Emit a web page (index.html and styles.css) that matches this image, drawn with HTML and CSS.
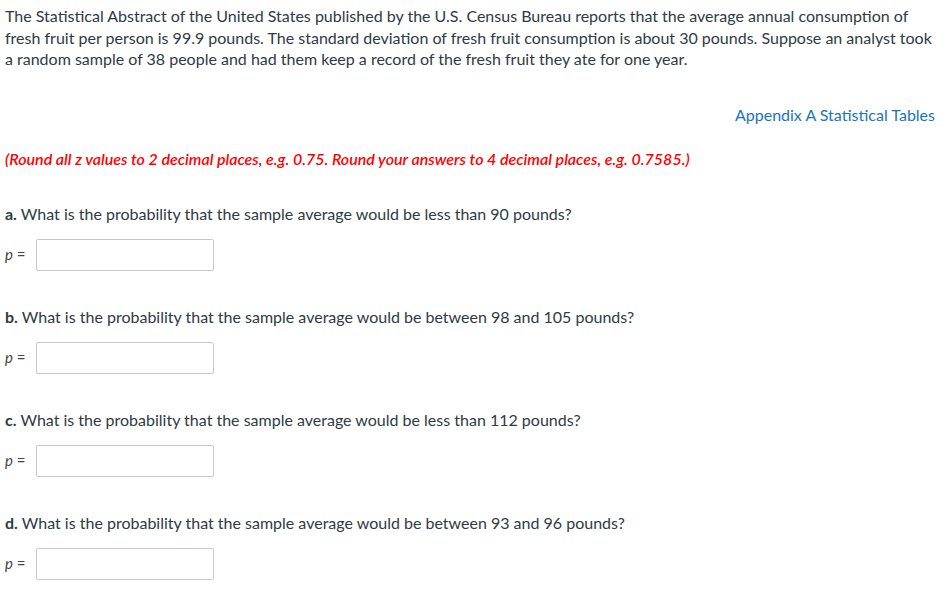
FILE: index.html
```html
<!DOCTYPE html>
<html>
<head>
<meta charset="utf-8">
<link rel="stylesheet" href="styles.css">
</head>
<body>
<div class="page">
  <p class="intro">The Statistical Abstract of the United States published by the U.S. Census Bureau reports that the average annual consumption of fresh fruit per person is 99.9 pounds. The standard deviation of fresh fruit consumption is about 30 pounds. Suppose an analyst took a random sample of 38 people and had them keep a record of the fresh fruit they ate for one year.</p>
  <div class="links"><a class="link" href="#">Appendix A Statistical Tables</a></div>
  <p class="note">(Round all z values to 2 decimal places, e.g. 0.75. Round your answers to 4 decimal places, e.g. 0.7585.)</p>
  <div class="question">
    <p class="qtext"><b>a.</b> What is the probability that the sample average would be less than 90 pounds?</p>
    <div class="answer"><span class="plabel"><i>p</i> =</span><span class="box"></span></div>
  </div>
  <div class="question">
    <p class="qtext"><b>b.</b> What is the probability that the sample average would be between 98 and 105 pounds?</p>
    <div class="answer"><span class="plabel"><i>p</i> =</span><span class="box"></span></div>
  </div>
  <div class="question">
    <p class="qtext"><b>c.</b> What is the probability that the sample average would be less than 112 pounds?</p>
    <div class="answer"><span class="plabel"><i>p</i> =</span><span class="box"></span></div>
  </div>
  <div class="question">
    <p class="qtext"><b>d.</b> What is the probability that the sample average would be between 93 and 96 pounds?</p>
    <div class="answer"><span class="plabel"><i>p</i> =</span><span class="box"></span></div>
  </div>
</div>
</body>
</html>
```
FILE: styles.css
```css
html, body { margin: 0; padding: 0; background: #fff; }
body { font-family: Lato, "Open Sans", sans-serif; color: #2d3b45; font-size: 16px; line-height: 21.5px; }
.page { padding: 5px 13px 0 5px; }
p { margin: 0; }
.links { display: flex; justify-content: flex-end; margin-top: 34px; }
.link { color: #1a75bb; text-decoration: none; }
.note { margin-top: 23px; color: #ff0000; font-style: italic; font-weight: 600; }
.question { margin-top: 33px; }
.question + .question { margin-top: 34.5px; }
.answer { display: flex; align-items: center; margin-top: 15px; }
.plabel { font-size: 15px; color: #444; width: 31px; }
.plabel i { font-style: italic; }
.box { display: block; width: 176px; height: 30px; border: 1px solid #c8c8c8; border-radius: 2px; }
```
